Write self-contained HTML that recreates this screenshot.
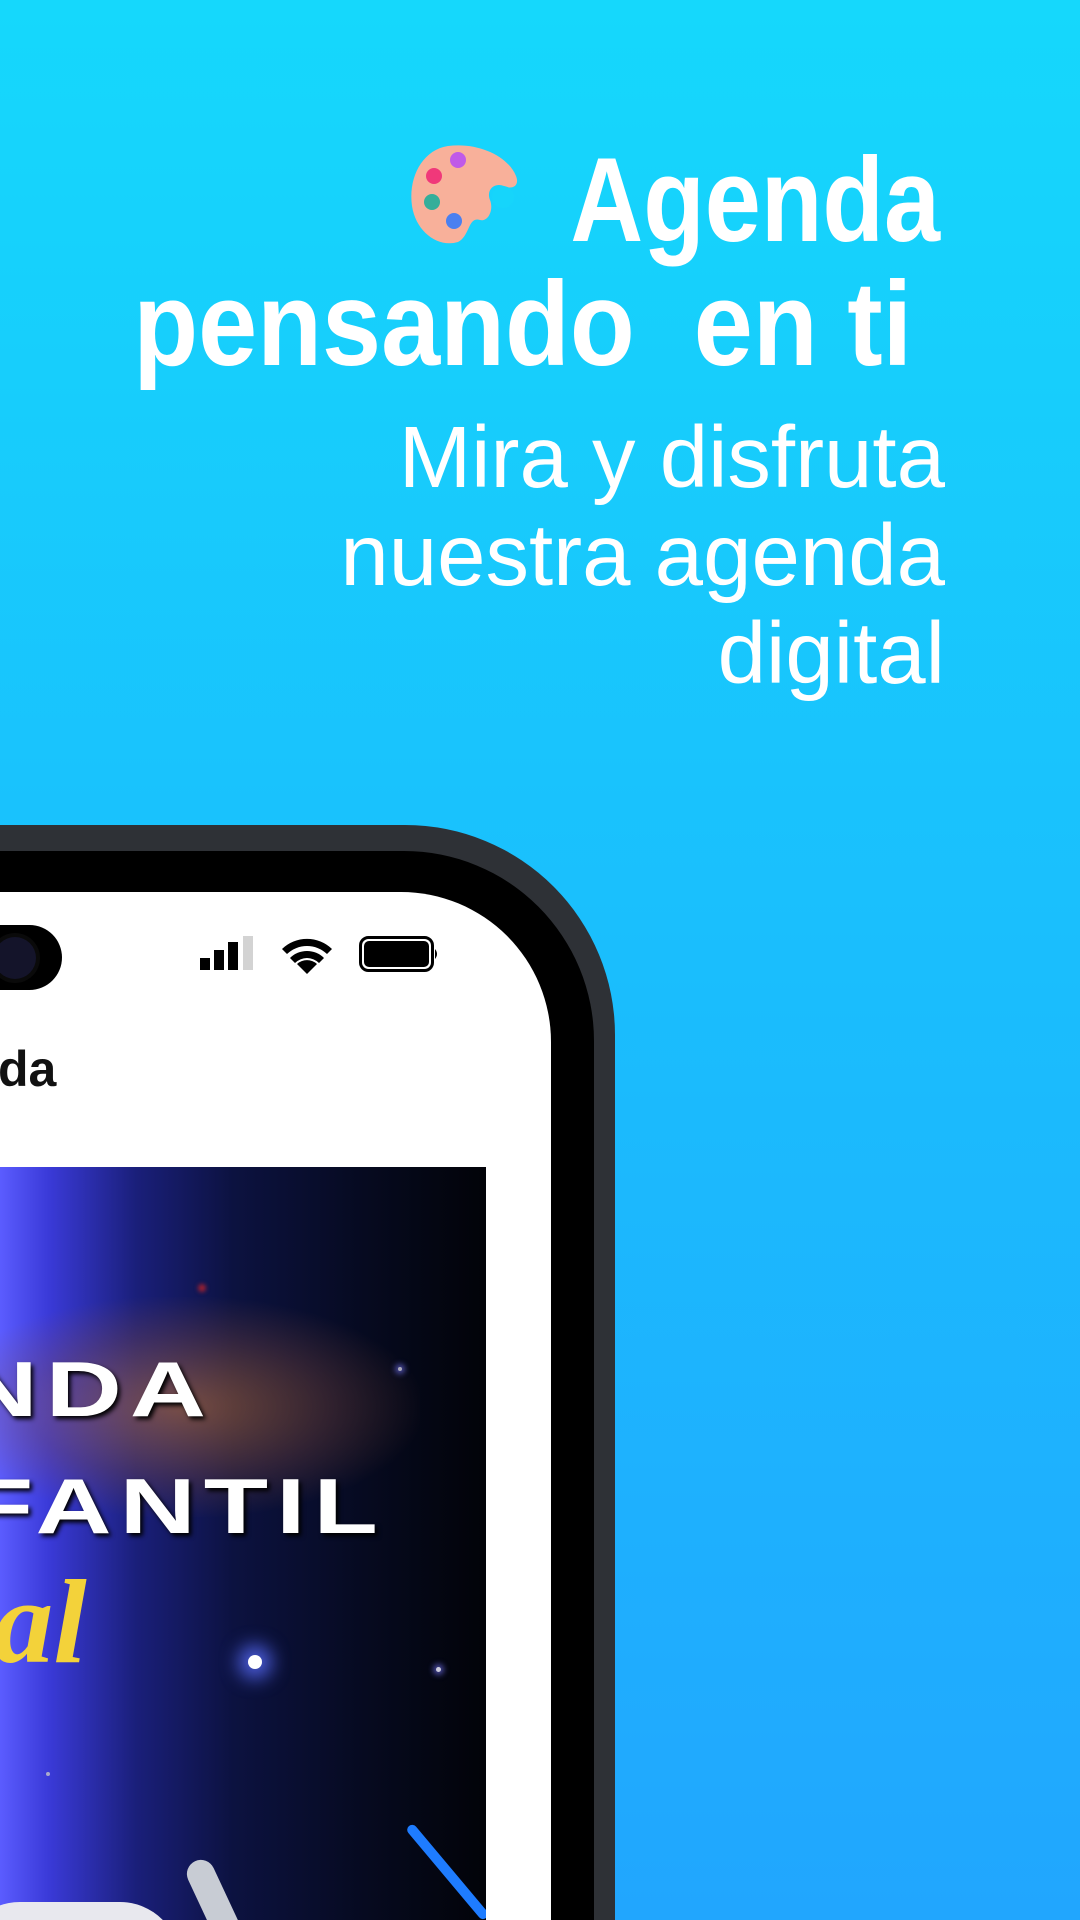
<!DOCTYPE html>
<html><head><meta charset="utf-8"><style>
html,body{margin:0;padding:0;width:1080px;height:1920px;overflow:hidden;}
#w{width:1080px;height:1920px;position:relative;overflow:hidden;background:linear-gradient(180deg,#15d8fc 0%,#1abefd 50%,#21a6fe 100%);font-family:"Liberation Sans",sans-serif;}
.t{position:absolute;color:#fff;white-space:nowrap;line-height:1;}
.b{font-weight:bold;font-size:120px;transform-origin:right bottom;}
.s{font-size:87px;right:135px;}
</style></head><body><div id="w">
<svg style="position:absolute;left:408px;top:142px" width="116" height="104" viewBox="0 0 116 104">
<path d="M40 4 C70 0 100 14 108 34 C112 44 104 48 96 44 C86 40 78 48 82 58 C86 68 80 80 72 78 C60 74 62 94 50 100 C30 106 8 90 4 64 C0 36 14 8 40 4 Z" fill="#f8b09a"/>
<circle cx="95" cy="55" r="11" fill="#16d5fb"/>
<circle cx="50" cy="18" r="8" fill="#c05ae8"/>
<circle cx="26" cy="34" r="8" fill="#f0387a"/>
<circle cx="24" cy="60" r="8" fill="#35ae9a"/>
<circle cx="46" cy="79" r="8" fill="#4a80f0"/>
</svg>
<div class="t b" style="right:140px;top:140px;transform:scaleX(0.84)">Agenda</div>
<div class="t b" style="right:168px;top:264px;transform:scaleX(0.885)">pensando&nbsp;&nbsp;en ti</div>
<div class="t s" style="top:414px">Mira y disfruta</div>
<div class="t s" style="top:512px">nuestra agenda</div>
<div class="t s" style="top:610px">digital</div>

<div style="position:absolute;left:-400px;top:825px;width:1015px;height:1095px;background:#2e3136;border-radius:210px 210px 0 0;"></div>
<div style="position:absolute;left:-400px;top:851px;width:994px;height:1069px;background:#000;border-radius:190px 190px 0 0;"></div>
<div style="position:absolute;left:-400px;top:892px;width:951px;height:1028px;background:#fff;border-radius:150px 150px 0 0;"></div>
<div style="position:absolute;left:-100px;top:925px;width:162px;height:65px;background:#000;border-radius:33px;"></div>
<div style="position:absolute;left:-6px;top:937px;width:42px;height:42px;background:#14142a;border-radius:50%;box-shadow:0 0 0 4px #0a0a0a"></div>
<svg style="position:absolute;left:200px;top:936px" width="56" height="36" viewBox="0 0 56 36"><rect x="0" y="22" width="10" height="12" fill="#000"/><rect x="14" y="14" width="10" height="20" fill="#000"/><rect x="28" y="6" width="10" height="28" fill="#000"/><rect x="43" y="0" width="10" height="34" fill="#d3d3d3"/></svg>
<svg style="position:absolute;left:280px;top:934px" width="54" height="40" viewBox="0 0 54 40"><path d="M27 40 L17 30 A15 15 0 0 1 37 30 Z" fill="#000"/><path d="M10 24 A24 24 0 0 1 44 24 L39 29 A17 17 0 0 0 15 29 Z" fill="#000"/><path d="M2 15 A36 36 0 0 1 52 15 L47 20 A29 29 0 0 0 7 20 Z" fill="#000"/></svg>
<svg style="position:absolute;left:359px;top:936px" width="82" height="38" viewBox="0 0 82 38"><rect x="1.5" y="1.5" width="72" height="33" rx="8" fill="none" stroke="#000" stroke-width="3"/><rect x="5" y="5" width="65" height="26" rx="5" fill="#000"/><path d="M76 13 Q80 18 76 23 Z" fill="#000"/></svg>
<div class="t" style="left:-127px;top:1044px;font-size:50px;font-weight:bold;color:#111;">Agenda</div>
<div style="position:absolute;left:0;top:1167px;width:486px;height:753px;overflow:hidden;background:linear-gradient(90deg,#5b5cff 0%,#3a3ad8 10%,#1a1f7a 28%,#0c1240 48%,#060a20 75%,#020308 100%);">
 <div style="position:absolute;left:-60px;top:130px;width:480px;height:220px;background:radial-gradient(ellipse at center,rgba(200,120,50,0.55) 0%,rgba(140,80,60,0.3) 45%,rgba(0,0,0,0) 72%);"></div>
 <div class="t" style="right:272px;top:183px;font-size:78px;font-weight:bold;letter-spacing:6px;transform:scaleX(1.35);transform-origin:right;text-shadow:2px 3px 4px #000;">AGENDA</div>
 <div class="t" style="right:100px;top:300px;font-size:78px;font-weight:bold;letter-spacing:6px;transform:scaleX(1.35);transform-origin:right;text-shadow:2px 3px 4px #000;">INFANTIL</div>
 <div class="t" style="left:-40px;top:395px;font-size:120px;font-weight:bold;font-style:italic;color:#f3d23a;font-family:'Liberation Serif',serif;">tal</div>
 <div style="position:absolute;left:248px;top:488px;width:14px;height:14px;border-radius:50%;background:#fff;box-shadow:0 0 18px 10px rgba(90,110,255,0.8)"></div>
 <div style="position:absolute;left:398px;top:200px;width:4px;height:4px;border-radius:50%;background:#aab;box-shadow:0 0 6px 3px rgba(120,120,255,.6)"></div>
 <div style="position:absolute;left:436px;top:500px;width:5px;height:5px;border-radius:50%;background:#ccd;box-shadow:0 0 6px 3px rgba(120,120,255,.6)"></div>
 <div style="position:absolute;left:198px;top:117px;width:8px;height:8px;border-radius:50%;background:#a02030;filter:blur(2px)"></div>
 <div style="position:absolute;left:46px;top:605px;width:4px;height:4px;border-radius:50%;background:#aac;"></div>
 <div style="position:absolute;left:404px;top:659px;width:10px;height:120px;background:#1e7cff;border-radius:5px;transform:rotate(-40deg);transform-origin:top;"></div>
 <div style="position:absolute;left:200px;top:690px;width:28px;height:90px;background:#c8ccd4;border-radius:14px;transform:rotate(-25deg);"></div>
 <div style="position:absolute;left:-40px;top:735px;width:220px;height:60px;background:#e8e8ee;border-radius:60px 60px 0 0;"></div>
</div>
</div></body></html>
